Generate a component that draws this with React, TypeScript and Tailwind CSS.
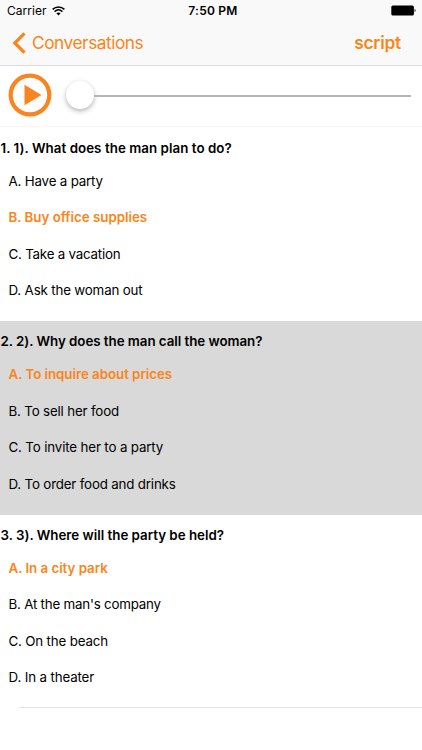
import React from 'react';
import clsx from 'clsx';

interface Question {
  id: number;
  title: string;
  titleClass: string;
  options: { text: string; className: string }[];
  answer: number;
}

const questions: Question[] = [
  {
    id: 1,
    title: '1. 1). What does the man plan to do?',
    titleClass: 'tracking-[0.05px]',
    answer: 1,
    options: [
      { text: 'A. Have a party', className: 'tracking-[-0.18px]' },
      { text: 'B. Buy office supplies', className: 'tracking-[-0.02px]' },
      { text: 'C. Take a vacation', className: 'tracking-[-0.22px]' },
      { text: 'D. Ask the woman out', className: 'tracking-[-0.17px]' },
    ],
  },
  {
    id: 2,
    title: '2. 2). Why does the man call the woman?',
    titleClass: 'tracking-[-0.04px]',
    answer: 0,
    options: [
      { text: 'A. To inquire about prices', className: 'tracking-[-0.04px]' },
      { text: 'B. To sell her food', className: 'tracking-[-0.17px]' },
      { text: 'C. To invite her to a party', className: 'tracking-[-0.15px]' },
      { text: 'D. To order food and drinks', className: 'tracking-[-0.18px]' },
    ],
  },
  {
    id: 3,
    title: '3. 3). Where will the party be held?',
    titleClass: 'tracking-[-0.01px]',
    answer: 0,
    options: [
      { text: 'A. In a city park', className: 'tracking-[-0.04px]' },
      { text: "B. At the man's company", className: 'tracking-[-0.21px]' },
      { text: 'C. On the beach', className: 'tracking-[-0.17px]' },
      { text: 'D. In a theater', className: 'tracking-[-0.14px]' },
    ],
  },
];

const StatusBar = () => (
  <div className="grid h-[22px] grid-cols-3 items-center pr-[6px] pl-[7px] text-[12px] leading-[22px]">
    <div className="flex items-center gap-[5px]">
      <span className="tracking-[0.05px]">Carrier</span>
      <svg width="13" height="10" viewBox="0 0 13 10" fill="none" stroke="#000" strokeWidth="1.5">
        <path d="M0.6 3.4C4 .1 9 .1 12.4 3.4" />
        <path d="M2.6 5.6C5 3.4 8 3.4 10.4 5.6" />
        <path d="M6.5 9.5L4.4 7.3C5.6 6.2 7.4 6.2 8.6 7.3Z" fill="#000" stroke="none" />
      </svg>
    </div>
    <span className="pl-[3px] text-center font-semibold tracking-[0.25px]">7:50 PM</span>
    <svg className="mb-[2px] justify-self-end" width="25" height="11" viewBox="0 0 25 11">
      <rect x="0.3" y="0.5" width="22.6" height="10" rx="1.5" />
      <path d="M23.6 3.8C24.9 4.2 24.9 6.8 23.6 7.2Z" />
    </svg>
  </div>
);

const NavBar = () => (
  <div className="flex h-[43px] items-center justify-between pr-[21px] pb-[2px] pl-[12px] text-[#fa851a]">
    <button className="flex items-center gap-[6px] text-[17.3px] tracking-[-0.46px]">
      <svg width="14" height="22" viewBox="0 0 14 22" fill="none" stroke="currentColor" strokeWidth="3.2">
        <path d="M12.5 1.3L2.8 11L12.5 20.7" />
      </svg>
      Conversations
    </button>
    <button className="text-[17.3px] font-semibold tracking-[-0.2px]">script</button>
  </div>
);

const Player = () => (
  <div className="flex h-[61px] items-center border-b border-[#f5f5f5] pb-[2px] pl-2">
    <svg width="44" height="44" viewBox="0 0 44 44">
      <circle cx="22" cy="22" r="19.3" fill="none" stroke="#fa8520" strokeWidth="4.2" />
      <path d="M16.5 11.8L33.5 22L16.5 32.2Z" fill="#fa8520" />
    </svg>
    <div className="ml-[14px] flex items-center">
      <div className="size-7 rounded-full bg-white shadow-[0_2px_5px_rgba(0,0,0,0.3)]" />
      <div className="mt-[2px] h-[2px] w-[317px] bg-[#b5b5b5]" />
    </div>
  </div>
);

const QuestionBlock = ({ question }: { question: Question }) => (
  <section
    className={clsx('h-[193.5px] pt-[10px] text-[13.33px]', question.id % 2 === 0 && 'bg-[#d9d9d9]')}
  >
    <h2 className={clsx('h-[25px] pl-[0.5px] leading-[21px] font-semibold whitespace-nowrap', question.titleClass)}>
      {question.title}
    </h2>
    <ul className="pl-[8.5px]">
      {question.options.map((option, i) => (
        <li
          key={option.text}
          className={clsx(
            'h-[36.67px] leading-[36.67px] whitespace-nowrap',
            option.className,
            i === question.answer && 'font-semibold text-[#fa851a]'
          )}
        >
          {option.text}
        </li>
      ))}
    </ul>
  </section>
);

export default function App() {
  return (
    <div className="flex h-[750px] w-[422px] flex-col overflow-hidden bg-white font-[Inter,sans-serif] text-black">
      <header className="border-b border-[#dcdcdc] bg-[#f9f9f9]">
        <StatusBar />
        <NavBar />
      </header>
      <Player />
      <main className="pt-[0.5px]">
        {questions.map((question) => (
          <QuestionBlock key={question.id} question={question} />
        ))}
        <div className="-mt-px ml-5 h-px bg-[#e3e3e3]" />
      </main>
    </div>
  );
}
